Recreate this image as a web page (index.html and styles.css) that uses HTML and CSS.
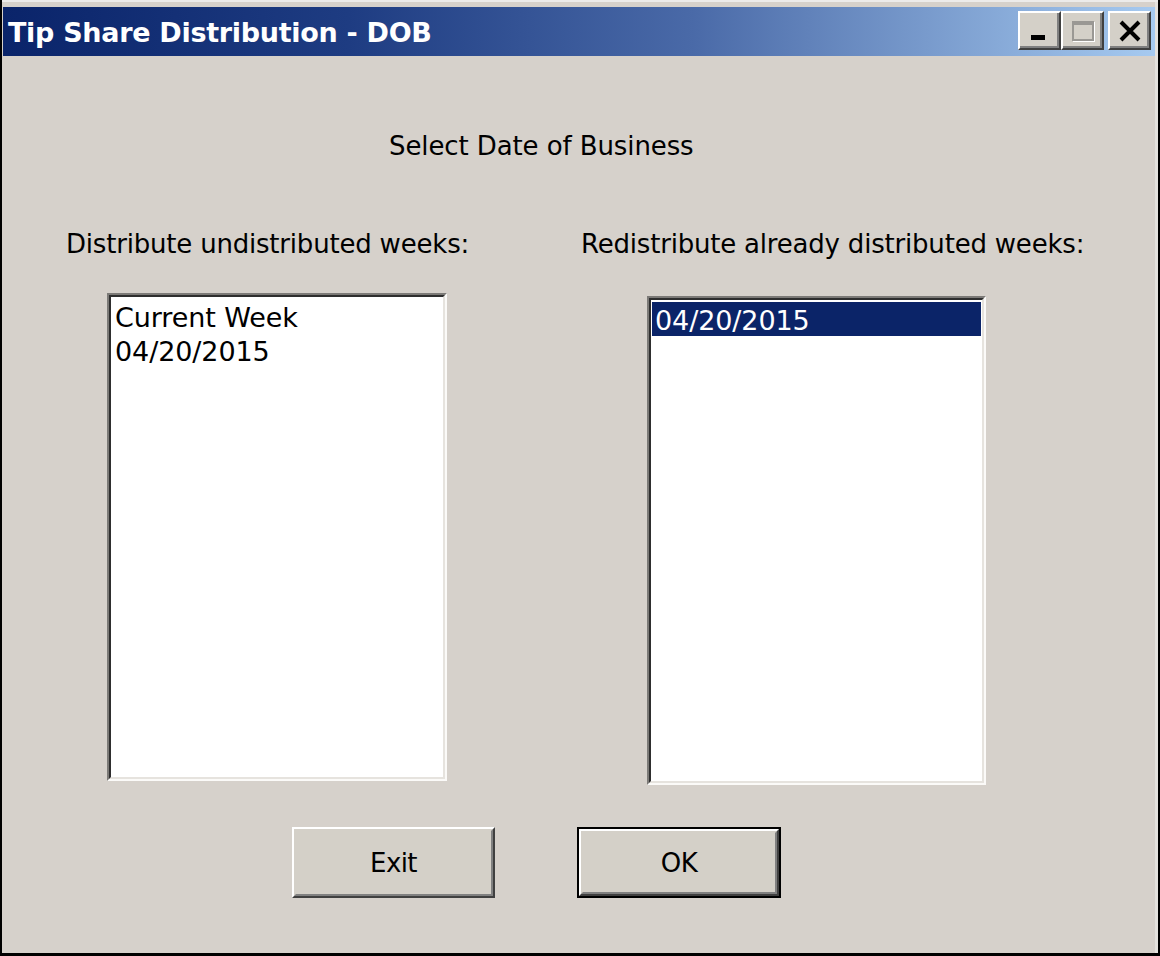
FILE: index.html
```html
<!DOCTYPE html>
<html>
<head>
<meta charset="utf-8">
<link rel="stylesheet" href="styles.css">
</head>
<body>
<div class="window">
  <div class="titlebar">
    <span class="title">Tip Share Distribution - DOB</span>
    <div class="tb-buttons">
      <div class="tb-btn tb-min"><span class="min-glyph"></span></div>
      <div class="tb-btn tb-max"><span class="max-glyph"></span></div>
      <div class="tb-btn tb-close">
        <svg width="24" height="22" viewBox="0 0 24 22"><path d="M3 2 L21 20 M21 2 L3 20" stroke="#000" stroke-width="4"/></svg>
      </div>
    </div>
  </div>
  <div class="client">
    <div class="heading">Select Date of Business</div>
    <div class="columns">
      <div class="col col-left">
        <div class="label">Distribute undistributed weeks:</div>
        <div class="listbox">
          <div class="listinner">
            <div class="item">Current Week</div>
            <div class="item">04/20/2015</div>
          </div>
        </div>
      </div>
      <div class="col col-right">
        <div class="label">Redistribute already distributed weeks:</div>
        <div class="listbox">
          <div class="listinner">
            <div class="item selected">04/20/2015</div>
          </div>
        </div>
      </div>
    </div>
    <div class="buttons">
      <div class="btn btn-exit"><div class="btn-in">Exit</div></div>
      <div class="btn-default"><div class="btn btn-ok"><div class="btn-in">OK</div></div></div>
    </div>
  </div>
</div>
</body>
</html>
```
FILE: styles.css
```css
html, body {
  margin: 0;
  padding: 0;
  background: #000;
  width: 1160px;
  height: 956px;
  overflow: hidden;
}
body {
  font-family: "DejaVu Sans", "Liberation Sans", sans-serif;
  color: #000;
}
.window {
  margin-left: 2px;
  width: 1156px;
  height: 953px;
  background: #d6d1cb;
  box-sizing: border-box;
  padding: 7px 3px 0 1px;
  display: flex;
  flex-direction: column;
  box-shadow: inset 0 2px 0 #ecebea, inset -3px 0 0 #e4e2de;
}
.titlebar {
  height: 49px;
  flex: none;
  background: linear-gradient(to right, #0a246a 0%, #1e3c82 30%, #4a6aa8 60%, #a6caf0 100%);
  display: flex;
  align-items: center;
  justify-content: space-between;
  padding-left: 5px;
  box-sizing: border-box;
}
.title {
  color: #fff;
  font-weight: bold;
  font-size: 27px;
  letter-spacing: -0.3px;
  margin-top: 2px;
}
.tb-buttons {
  display: flex;
  margin-right: 4px;
  margin-top: -2px;
}
.tb-btn {
  width: 43px;
  height: 39px;
  box-sizing: border-box;
  background: #d4d0c8;
  border-style: solid;
  border-width: 2px;
  border-color: #fff #404040 #404040 #fff;
  box-shadow: inset -2px -2px 0 #808080;
  display: flex;
  align-items: center;
  justify-content: center;
  position: relative;
}
.tb-max { margin-right: 4px; }
.min-glyph {
  position: absolute;
  left: 11px;
  bottom: 8px;
  width: 14px;
  height: 5px;
  background: #000;
}
.max-glyph {
  width: 22px;
  height: 20px;
  box-sizing: border-box;
  border: 2px solid #9a9894;
  border-top-width: 4px;
  box-shadow: 1px 1px 0 #fff;
}
.tb-close svg { display: block; margin-top: 1px; }
.client {
  flex: 1;
  display: flex;
  flex-direction: column;
}
.heading {
  font-size: 26px;
  letter-spacing: -0.1px;
  height: 30px;
  line-height: 30px;
  margin-top: 75px;
  padding-left: 386px;
}
.columns {
  display: flex;
  margin-top: 68px;
}
.col {
  display: flex;
  flex-direction: column;
}
.label {
  font-size: 26px;
  letter-spacing: -0.2px;
  height: 30px;
  line-height: 30px;
  white-space: nowrap;
}
.col-left {
  width: 578px;
  padding-left: 63px;
  box-sizing: border-box;
}
.col-left .listbox {
  margin-left: 41px;
  margin-top: 34px;
  width: 340px;
  height: 488px;
}
.col-right .listbox {
  margin-left: 66px;
  margin-top: 37px;
  width: 339px;
  height: 489px;
}
.listbox {
  box-sizing: border-box;
  border-style: solid;
  border-width: 2px;
  border-color: #7c7a77 #fbfaf8 #fbfaf8 #7c7a77;
}
.listinner {
  box-sizing: border-box;
  height: 100%;
  background: #fff;
  border-style: solid;
  border-width: 2px;
  border-color: #2e2e2e #e6e3de #e6e3de #2e2e2e;
  padding: 2px 1px;
}
.item {
  font-size: 27px;
  letter-spacing: -0.1px;
  box-sizing: border-box;
  height: 34px;
  line-height: 31px;
  padding-top: 3px;
  padding-left: 3px;
  white-space: nowrap;
}
.item.selected {
  background: #0b2468;
  color: #fff;
}
.buttons {
  display: flex;
  margin-top: 42px;
  padding-left: 289px;
  align-items: flex-start;
}
.btn {
  box-sizing: border-box;
  width: 203px;
  height: 71px;
  background: #d4d0c8;
  border-style: solid;
  border-width: 2px;
  border-color: #fff #404040 #404040 #fff;
}
.btn-in {
  box-sizing: border-box;
  height: 100%;
  border-style: solid;
  border-width: 2px;
  border-color: #d4d0c8 #808080 #808080 #d4d0c8;
  display: flex;
  align-items: center;
  justify-content: center;
  font-size: 26px;
  letter-spacing: -0.6px;
}
.btn-default {
  margin-left: 82px;
  border: 2px solid #000;
  width: 204px;
  height: 71px;
  box-sizing: border-box;
}
.btn-ok {
  width: 100%;
  height: 100%;
}
```
